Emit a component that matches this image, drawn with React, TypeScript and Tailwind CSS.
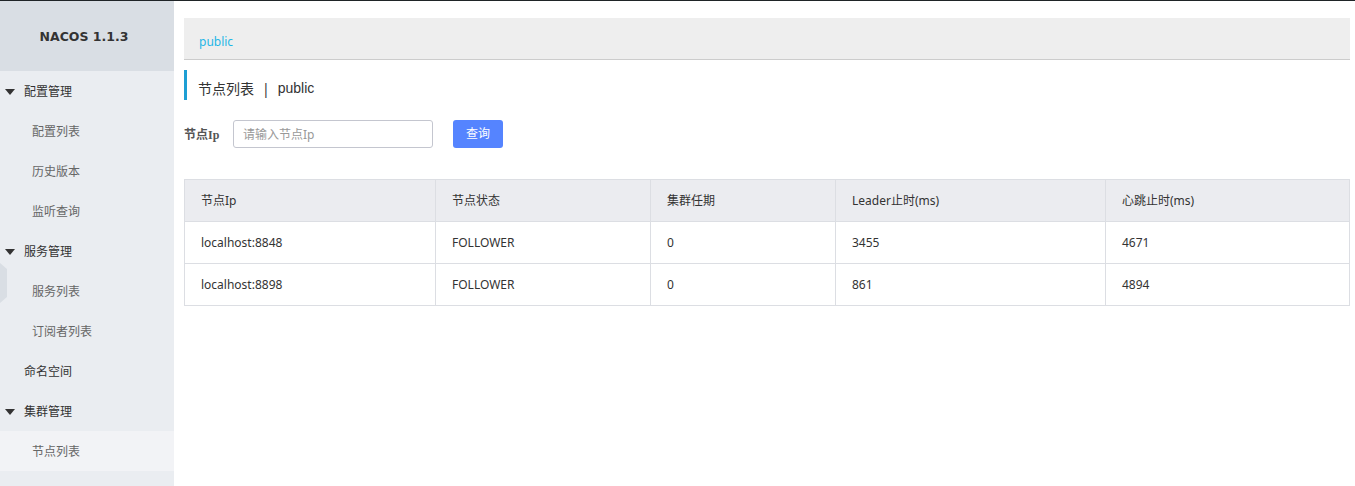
import React from "react";

const font = { fontFamily: '"Noto Sans", "Noto Sans CJK SC", sans-serif' };

type NavItem = { label: string; level: 0 | 1; arrow?: boolean; active?: boolean };

const nav: NavItem[] = [
  { label: "配置管理", level: 0, arrow: true },
  { label: "配置列表", level: 1 },
  { label: "历史版本", level: 1 },
  { label: "监听查询", level: 1 },
  { label: "服务管理", level: 0, arrow: true },
  { label: "服务列表", level: 1 },
  { label: "订阅者列表", level: 1 },
  { label: "命名空间", level: 0 },
  { label: "集群管理", level: 0, arrow: true },
  { label: "节点列表", level: 1, active: true },
];

const columns = ["节点Ip", "节点状态", "集群任期", "Leader止时(ms)", "心跳止时(ms)"];
const rows = [
  ["localhost:8848", "FOLLOWER", "0", "3455", "4671"],
  ["localhost:8898", "FOLLOWER", "0", "861", "4894"],
];

const Sidebar: React.FC = () => (
  <aside className="relative w-[174px] shrink-0 bg-[#eaedf1] min-h-[485px]">
    {/* Logo */}
    <div className="h-[70px] bg-[#d9dee4] flex items-center justify-center pt-[2px]">
      <span
        className="font-bold text-[#333] pr-[6px]"
        style={{ fontFamily: '"DejaVu Sans", sans-serif', fontSize: 12.5 }}
      >
        NACOS 1.1.3
      </span>
    </div>
    {/* Menu */}
    <ul className="text-[12px]">
      {nav.map((item) => (
        <li
          key={item.label}
          className={`h-10 flex items-center pt-[2px] ${item.active ? "bg-[#f2f3f6]" : ""}`}
        >
          {item.level === 0 ? (
            <div className="flex items-center text-[#333]">
              <span className="w-6 flex justify-center pr-[5px]">
                {item.arrow && (
                  <svg width="10" height="6" viewBox="0 0 10 6">
                    <path d="M0 0 L10 0 L5 6 Z" fill="#333" />
                  </svg>
                )}
              </span>
              {item.label}
            </div>
          ) : (
            <span className="pl-8 text-[#666]">{item.label}</span>
          )}
        </li>
      ))}
    </ul>
    {/* collapse handle */}
    <svg className="absolute left-0 top-[262px]" width="8" height="40" viewBox="0 0 8 40">
      <path d="M0 0 L7 6 L7 34 L0 40 Z" fill="#d9dee4" />
    </svg>
  </aside>
);

const App: React.FC = () => {
  return (
    <div className="w-[1355px] h-[486px] bg-white overflow-hidden" style={font}>
      <div className="h-px bg-[#1f2427]" />
      <div className="flex">
        <Sidebar />
        <main className="flex-1 pl-[10px] pr-[6px] pt-[17px]">
          {/* Breadcrumb */}
          <div className="h-[42px] bg-[#eeeeee] border-b border-[#cccccc] flex items-center pl-[15px] pt-[6px]">
            <span className="text-[12px] text-[#1fb6e6]">public</span>
          </div>

          {/* Title */}
          <div className="mt-[10px] h-[30px] border-l-[3px] border-[#1e9fd4] flex items-center pl-[11px] pt-[6px] text-[14px] text-[#333]">
            节点列表<span className="mx-[8px] text-[#333]">|</span>
            <span style={{ fontFamily: '"Liberation Sans", sans-serif' }}>public</span>
          </div>

          {/* Search */}
          <div className="mt-[20px] flex items-center h-[28px]">
            <label
              className="text-[12px] font-bold text-[#555] w-[49px] pt-[2px]"
              style={{ fontFamily: '"Liberation Serif", "Noto Sans CJK SC", serif' }}
            >
              节点Ip
            </label>
            <input
              className="w-[200px] h-[28px] border border-[#c4c6cf] rounded-[3px] px-[9px] text-[12px] outline-none placeholder:text-[#999]"
              placeholder="请输入节点Ip"
            />
            <button className="ml-[20px] w-[50px] h-[28px] rounded-[3px] bg-[#5584ff] text-white text-[12px]">
              查询
            </button>
          </div>

          {/* Table */}
          <table className="mt-[31px] w-[1166px] table-fixed border-collapse text-[12px] text-[#333]">
            <colgroup>
              <col className="w-[251px]" />
              <col className="w-[215px]" />
              <col className="w-[185px]" />
              <col className="w-[270px]" />
              <col />
            </colgroup>
            <thead>
              <tr className="bg-[#ebecf0] h-[42px]">
                {columns.map((c) => (
                  <th key={c} className="border border-[#dcdee3] text-left font-normal pl-4">
                    {c}
                  </th>
                ))}
              </tr>
            </thead>
            <tbody>
              {rows.map((r) => (
                <tr key={r[0]} className="h-[42px]">
                  {r.map((cell, i) => (
                    <td key={i} className="border border-[#dcdee3] pl-4">
                      {cell}
                    </td>
                  ))}
                </tr>
              ))}
            </tbody>
          </table>
        </main>
      </div>
    </div>
  );
};

export default App;
